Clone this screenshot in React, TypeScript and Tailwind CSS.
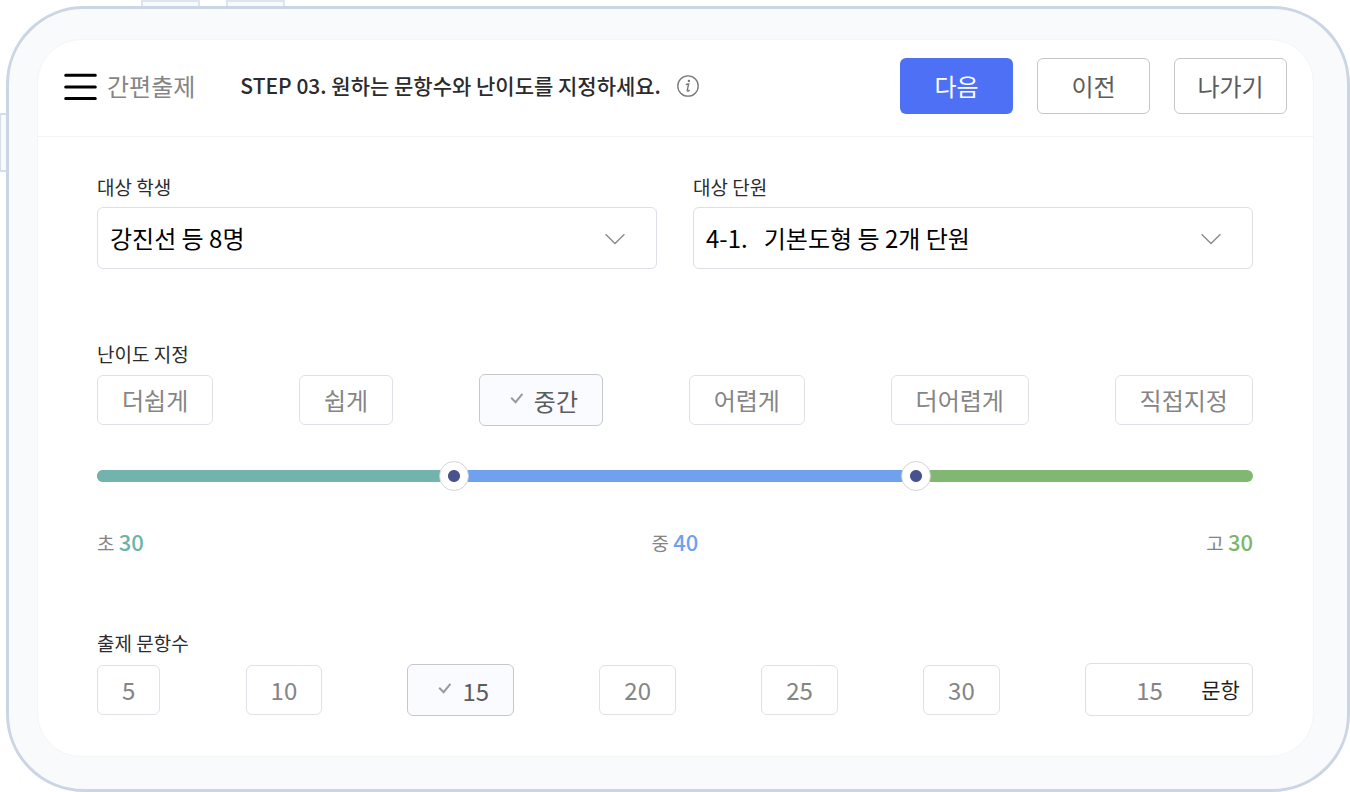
import { useState, type ReactNode } from "react";

const LEVELS = ["더쉽게", "쉽게", "중간", "어렵게", "더어렵게", "직접지정"];
const COUNTS = ["5", "10", "15", "20", "25", "30"];

const THUMB =
  "pointer-events-none absolute -left-[5px] h-[30px] w-[calc(100%+30px)] appearance-none bg-transparent [&::-webkit-slider-thumb]:pointer-events-auto [&::-webkit-slider-thumb]:size-[30px] [&::-webkit-slider-thumb]:cursor-pointer [&::-webkit-slider-thumb]:appearance-none [&::-webkit-slider-thumb]:rounded-full [&::-webkit-slider-thumb]:border [&::-webkit-slider-thumb]:border-[#d4d4d4] [&::-webkit-slider-thumb]:bg-[radial-gradient(circle,#48528f_5.5px,#ffffff_6.5px)]";

function CheckIcon() {
  return (
    <svg aria-hidden="true" viewBox="0 0 14 14" className="mb-1.5 size-3.5 shrink-0" fill="none" stroke="#9a9a9a" strokeWidth="2">
      <path d="M1.2 6.8 5.6 11.2 12.4 2.8" />
    </svg>
  );
}

function Choice({ label, selected, onClick }: { label: string; selected: boolean; onClick: () => void }) {
  return (
    <button
      type="button"
      aria-pressed={selected}
      onClick={onClick}
      className={
        selected
          ? "flex h-[52px] items-center gap-[10px] rounded-md border border-[#c6c8ca] bg-[#fafbff] pl-[30px] pr-6 pt-0.5 text-2xl text-[#5c5c5c]"
          : "flex h-[50px] items-center rounded-md border border-[#dee1e8] bg-white px-6 text-2xl text-[#858585]"
      }
    >
      {selected && <CheckIcon />}
      {label}
    </button>
  );
}

function SelectField({ id, label, value }: { id: string; label: string; value: string }) {
  return (
    <div className="min-w-0 flex-1">
      <label htmlFor={id} className="mb-1.5 block text-[19px] leading-7 text-[#2b2b2b]">
        {label}
      </label>
      <div className="relative">
        <select
          id={id}
          className="block h-[62px] w-full appearance-none rounded-md border border-[#dddee6] bg-white pl-3 pr-16 text-2xl text-black"
        >
          <option>{value}</option>
        </select>
        <svg
          aria-hidden="true"
          viewBox="0 0 20 12"
          className="pointer-events-none absolute right-8 top-[26px] h-3 w-5"
          fill="none"
          stroke="#8a8a8a"
          strokeWidth="1.4"
        >
          <path d="M.6 1.2 10 10.4 19.4 1.2" />
        </svg>
      </div>
    </div>
  );
}

function SectionTitle({ children }: { children: ReactNode }) {
  return <h2 className="mb-1.5 text-[19px] leading-7 text-[#2b2b2b]">{children}</h2>;
}

function Share({ label, value, color }: { label: string; value: number; color: string }) {
  return (
    <p className="text-[19px] leading-8 text-[#858585]">
      {label} <span className={color}>{value}</span>
    </p>
  );
}

export default function App() {
  const [level, setLevel] = useState("중간");
  const [count, setCount] = useState("15");
  const [low, setLow] = useState(30);
  const [high, setHigh] = useState(70);

  return (
    <div className="relative flex min-h-screen flex-col bg-white pl-1.5 pt-1.5 font-['Noto_Sans_CJK_KR',sans-serif]">
      <div className="absolute left-[141px] top-0 h-2 w-[59px] border-2 border-[#dce4ed] bg-[#f9fafc]" />
      <div className="absolute left-[226px] top-0 h-2 w-[59px] border-2 border-[#dce4ed] bg-[#f9fafc]" />
      <div className="absolute left-0 top-[113px] h-[59px] w-2 border-2 border-l border-[#d3dde8] bg-[#f9fafc]" />

      <div className="relative flex flex-1 flex-col rounded-[78px] border-3 border-[#cbd6e4] bg-[#f9fafc] pb-8 pl-7 pr-[33px] pt-[30px]">
        <div className="flex-1 rounded-[44px] border border-[#f4f5f7] bg-white">
          <header className="flex items-center border-b border-[#f3f3f5] px-[26px] pb-[22px] pt-[18px]">
            <button type="button" className="flex items-center gap-[10px] text-2xl text-[#858585]">
              <svg aria-hidden="true" viewBox="0 0 33 28" className="h-7 w-[33px]" stroke="#000" strokeWidth="3" strokeLinecap="round">
                <path d="M1.7 3.3h29.6M1.7 15.1h29.6M1.7 26.500h29.600" />
              </svg>
              간편출제
            </button>
            <h1 className="ml-[45px] text-[21px] font-medium text-[#2b2b2b]">
              STEP 03. 원하는 문항수와 난이도를 지정하세요.
            </h1>
            <button type="button" aria-label="도움말" className="ml-4">
              <svg aria-hidden="true" viewBox="0 0 22 22" className="size-[22px]" fill="none" stroke="#777" strokeWidth="1.3">
                <circle cx="11" cy="11" r="10.2" />
                <circle cx="11.9" cy="5.9" r="1.2" fill="#777" stroke="none" />
                <path d="M8.8 9.6c1-.2 1.9-.4 2.8-.6l-1.3 6.1c-.1.9.4 1.2 1 .9.5-.2.9-.6 1.2-1" strokeWidth="1.4" />
              </svg>
            </button>
            <div className="ml-auto flex gap-6">
              <button type="button" className="h-14 w-[113px] rounded-md bg-[#4d70f5] text-2xl text-white">
                다음
              </button>
              <button type="button" className="h-14 w-[113px] rounded-md border border-[#c6c6c6] bg-white text-2xl text-[#5c5c5c]">
                이전
              </button>
              <button type="button" className="h-14 w-[113px] rounded-md border border-[#c6c6c6] bg-white text-2xl text-[#5c5c5c]">
                나가기
              </button>
            </div>
          </header>

          <main className="pl-[59px] pr-[60px] pt-9">
            <div className="flex gap-9">
              <SelectField id="students" label="대상 학생" value="강진선 등 8명" />
              <SelectField id="units" label="대상 단원" value={"4-1.\u00a0\u00a0\u00a0기본도형 등 2개 단원"} />
            </div>

            <section className="mt-[71px]">
              <SectionTitle>난이도 지정</SectionTitle>
              <div className="flex items-center justify-between">
                {LEVELS.map((l) => (
                  <Choice key={l} label={l} selected={l === level} onClick={() => setLevel(l)} />
                ))}
              </div>
              <div className="relative mt-[35px] flex h-[30px] items-center">
                <div className="flex h-3 w-full overflow-hidden rounded-full bg-[#82b673]">
                  <div className="bg-[#72b3ad]" style={{ width: `calc(${low}% + 10px)` }} />
                  <div className="bg-[#70a1ee]" style={{ width: `${high - low}%` }} />
                </div>
                <input
                  type="range"
                  aria-label="초 비율"
                  className={THUMB}
                  value={low}
                  onChange={(e) => setLow(Math.min(Number(e.target.value), high))}
                />
                <input
                  type="range"
                  aria-label="고 비율"
                  className={THUMB}
                  value={high}
                  onChange={(e) => setHigh(Math.max(Number(e.target.value), low))}
                />
              </div>
              <div className="mt-[34px] flex justify-between">
                <Share label="초" value={low} color="text-[22px] font-medium text-[#6bb3ab]" />
                <Share label="중" value={high - low} color="text-[22px] font-medium text-[#70a1ee]" />
                <Share label="고" value={100 - high} color="text-[22px] font-medium text-[#7cb66c]" />
              </div>
            </section>

            <section className="mt-[70px]">
              <SectionTitle>출제 문항수</SectionTitle>
              <div className="flex items-center justify-between">
                {COUNTS.map((c) => (
                  <Choice key={c} label={c} selected={c === count} onClick={() => setCount(c)} />
                ))}
                <label className="flex h-[53px] w-[168px] items-center rounded-md border border-[#dddee6] bg-white px-3 text-[21px] text-[#1f1f1f]">
                  <input
                    type="text"
                    inputMode="numeric"
                    value={count}
                    onChange={(e) => setCount(e.target.value)}
                    className="min-w-0 flex-1 bg-transparent text-center text-2xl text-[#858585] outline-none"
                  />
                  문항
                </label>
              </div>
            </section>
          </main>
        </div>
      </div>
    </div>
  );
}
